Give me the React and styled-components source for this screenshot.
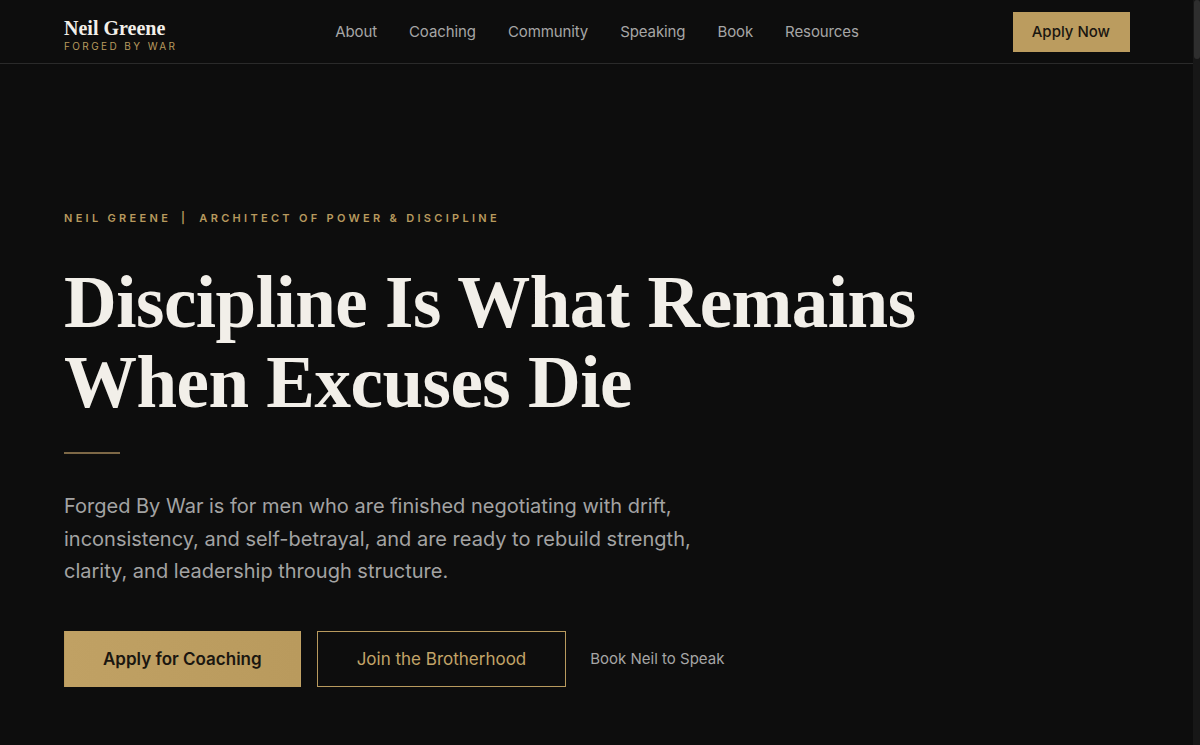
import styled, { createGlobalStyle } from "styled-components";

const GlobalStyle = createGlobalStyle`
  html, body {
    margin: 0;
    padding: 0;
    background: #0d0d0d;
  }
  body {
    font-family: Inter, "Noto Sans", sans-serif;
    color: #f2efe9;
  }
`;

const Page = styled.div`
  margin-right: 7px;
`;

// the browser's dark scrollbar, drawn over the right edge
const ScrollTrack = styled.div`
  position: fixed;
  top: 0;
  right: 0;
  width: 7px;
  height: 100vh;
  background: #171717;
`;

const ScrollThumb = styled.div`
  width: 6px;
  margin-left: 1px;
  height: 59px;
  border-radius: 3px;
  background: #2e2e2e;
`;

const Header = styled.header`
  height: 64px;
  border-bottom: 1px solid #2a2a2a;
  box-sizing: border-box;
  padding: 0 63px 0 64px;
  display: grid;
  grid-template-columns: 1fr auto 1fr;
  align-items: center;
`;

const Brand = styled.a`
  display: flex;
  flex-direction: column;
  text-decoration: none;
  padding-top: 6px;
`;

const BrandName = styled.span`
  font-family: "Liberation Serif", "DejaVu Serif", serif;
  font-weight: 700;
  font-size: 20px;
  line-height: 22px;
  color: #f2efe9;
`;

const BrandTag = styled.span`
  font-size: 10px;
  letter-spacing: 2.4px;
  color: #b89a5e;
  line-height: 12px;
  margin-top: 1px;
`;

const Nav = styled.nav`
  display: flex;
  gap: 32px;
`;

const NavLink = styled.a`
  font-size: 15px;
  letter-spacing: -0.1px;
  color: #a6a6a6;
  text-decoration: none;
`;

const HeaderButton = styled.a`
  justify-self: end;
  background: #bb9c5f;
  color: #1a1610;
  font-size: 15px;
  font-weight: 500;
  padding: 0 20px 0 19px;
  height: 40px;
  display: flex;
  align-items: center;
  text-decoration: none;
`;

const Hero = styled.section`
  padding: 147px 64px 60px;
`;

const Eyebrow = styled.p`
  margin: 0;
  font-size: 11px;
  font-weight: 600;
  letter-spacing: 3.3px;
  color: #b89a5e;
  text-transform: uppercase;
`;

const Sep = styled.span`
  margin: 0 11px 0 10px;
`;

const Title = styled.h1`
  margin: 38px 0 0;
  font-family: "Liberation Serif", "DejaVu Serif", serif;
  font-weight: 700;
  font-size: 73px;
  line-height: 80px;
  color: #f2efe9;
  letter-spacing: -0.5px;
`;

const Rule = styled.div`
  width: 56px;
  height: 2px;
  background: #7d6846;
  margin-top: 29px;
`;

const Lead = styled.p`
  margin: 36px 0 0;
  max-width: 660px;
  font-size: 20px;
  line-height: 32.5px;
  color: #a3a3a3;
`;

const Actions = styled.div`
  display: flex;
  align-items: center;
  gap: 16px;
  margin-top: 43px;
`;

const Button = styled.a`
  height: 56px;
  box-sizing: border-box;
  padding: 0 ${(p) => (p.$solid ? 38 : 39)}px;
  display: flex;
  align-items: center;
  font-size: 17px;
  text-decoration: none;
  font-weight: ${(p) => (p.$solid ? 600 : 400)};
  color: ${(p) => (p.$solid ? "#1a1610" : "#c2a468")};
  background: ${(p) => (p.$solid ? "linear-gradient(90deg, #c0a164, #b99a5d)" : "transparent")};
  border: 1px solid ${(p) => (p.$solid ? "transparent" : "#b89a5e")};
`;

const TextLink = styled.a`
  font-size: 15px;
  color: #a6a6a6;
  text-decoration: none;
  margin-left: 8px;
`;

export default function App() {
  return (
    <Page>
      <GlobalStyle />
      <Header>
        <Brand href="#">
          <BrandName>Neil Greene</BrandName>
          <BrandTag>FORGED BY WAR</BrandTag>
        </Brand>
        <Nav>
          {["About", "Coaching", "Community", "Speaking", "Book", "Resources"].map((l) => (
            <NavLink key={l} href="#">{l}</NavLink>
          ))}
        </Nav>
        <HeaderButton href="#">Apply Now</HeaderButton>
      </Header>
      <Hero>
        <Eyebrow>
          Neil Greene<Sep>|</Sep>Architect of Power &amp; Discipline
        </Eyebrow>
        <Title>
          Discipline Is What Remains
          <br />
          When Excuses Die
        </Title>
        <Rule />
        <Lead>
          Forged By War is for men who are finished negotiating with drift, inconsistency,
          and self-betrayal, and are ready to rebuild strength, clarity, and leadership
          through structure.
        </Lead>
        <Actions>
          <Button $solid href="#">Apply for Coaching</Button>
          <Button href="#">Join the Brotherhood</Button>
          <TextLink href="#">Book Neil to Speak</TextLink>
        </Actions>
      </Hero>
      <ScrollTrack>
        <ScrollThumb />
      </ScrollTrack>
    </Page>
  );
}
